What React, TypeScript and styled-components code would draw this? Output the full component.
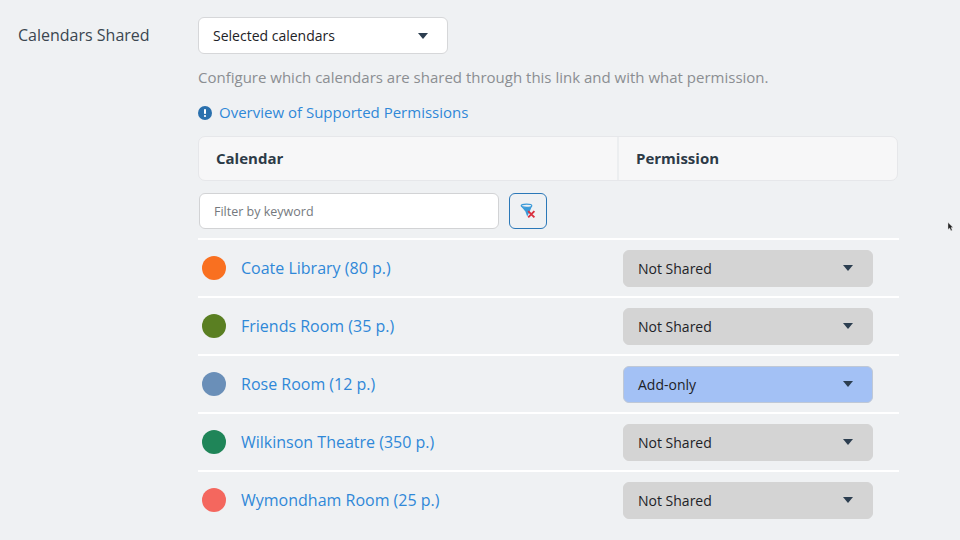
import React from "react";
import styled, { createGlobalStyle } from "styled-components";

const Global = createGlobalStyle`
  html, body { margin: 0; padding: 0; background: #eff1f3; height: 540px; overflow: hidden; }
  body { font-family: "Open Sans", "Liberation Sans", sans-serif; }
`;

const Page = styled.div`
  position: relative;
  width: 960px;
  height: 540px;
  display: flex;
  padding: 17px 0 0 18px;
  box-sizing: border-box;
  overflow: hidden;
`;

const FieldLabel = styled.div`
  width: 180px;
  flex: none;
  font-size: 16px;
  line-height: 36px;
  color: #3b4650;
`;

const Content = styled.div`
  width: 700px;
  flex: none;
  display: flex;
  flex-direction: column;
`;

const Select = styled.div<{ $bg: string; $border: string; $w: number; $h: number }>`
  width: ${(p) => p.$w}px;
  height: ${(p) => p.$h}px;
  box-sizing: border-box;
  display: flex;
  align-items: center;
  justify-content: space-between;
  padding: 0 19px 0 14px;
  background: ${(p) => p.$bg};
  border: 1px solid ${(p) => p.$border};
  border-radius: 6px;
  font-size: 14px;
  color: #1d2227;
`;

const Caret = styled.span`
  width: 0;
  height: 0;
  border-left: 5px solid transparent;
  border-right: 5px solid transparent;
  border-top: 6px solid #2c3e50;
`;

const Help = styled.p`
  margin: 13px 0 0;
  font-size: 15px;
  line-height: 20px;
  color: #8b8e92;
`;

const LinkRow = styled.div`
  display: flex;
  align-items: center;
  gap: 7px;
  margin-top: 16px;
  height: 20px;
`;

const Link = styled.a<{ $size: number }>`
  color: #2f88d8;
  font-size: ${(p) => p.$size}px;
  text-decoration: none;
`;

const OverviewLink = styled(Link)`
  margin-bottom: 2px;
`;

const Header = styled.div`
  display: flex;
  height: 45px;
  box-sizing: border-box;
  margin-top: 13px;
  background: #f7f7f8;
  border: 1px solid #e6e7ea;
  border-radius: 7px;
`;

const HeaderCell = styled.div<{ $w?: number }>`
  ${(p) => (p.$w ? `width: ${p.$w}px; border-right: 2px solid #eceef0;` : "flex: 1;")}
  box-sizing: border-box;
  display: flex;
  align-items: center;
  padding: 0 0 2px 17px;
  font-size: 15px;
  font-weight: 700;
  color: #2c3a47;
`;

const FilterRow = styled.div`
  display: flex;
  gap: 10px;
  margin: 12px 0 9px 1px;
`;

const FilterInput = styled.div`
  width: 300px;
  height: 36px;
  box-sizing: border-box;
  display: flex;
  align-items: center;
  padding-left: 14px;
  background: #fff;
  border: 1px solid #d2d3d5;
  border-radius: 6px;
  font-size: 12.5px;
  color: #75797e;
`;

const IconButton = styled.div`
  width: 38px;
  height: 36px;
  box-sizing: border-box;
  display: flex;
  align-items: center;
  justify-content: center;
  border: 1px solid #2b78b8;
  border-radius: 6px;
`;

const Row = styled.div`
  display: flex;
  align-items: center;
  height: 58px;
  box-sizing: border-box;
  border-top: 2px solid #fff;
  margin-right: -1px;
  padding: 0 26px 0 4px;
`;

const Dot = styled.span<{ $color: string }>`
  width: 24px;
  height: 24px;
  flex: none;
  border-radius: 50%;
  background: ${(p) => p.$color};
  margin-right: 15px;
`;

const RowLink = styled(Link)`
  flex: 1;
`;

const Cursor = styled.svg`
  position: absolute;
  left: 947px;
  top: 222px;
`;

const rows = [
  { name: "Coate Library (80 p.)", color: "#f97020", perm: "Not Shared" },
  { name: "Friends Room (35 p.)", color: "#5a7f22", perm: "Not Shared" },
  { name: "Rose Room (12 p.)", color: "#6a8fb8", perm: "Add-only" },
  { name: "Wilkinson Theatre (350 p.)", color: "#1f8558", perm: "Not Shared" },
  { name: "Wymondham Room (25 p.)", color: "#f4675e", perm: "Not Shared" },
];

export default function App() {
  return (
    <Page>
      <Global />
      <FieldLabel>Calendars Shared</FieldLabel>
      <Content>
        <Select $bg="#fff" $border="#d6d7d9" $w={250} $h={37}>
          Selected calendars
          <Caret />
        </Select>
        <Help>Configure which calendars are shared through this link and with what permission.</Help>
        <LinkRow>
          <svg width="14" height="14" viewBox="0 0 14 14">
            <circle cx="7" cy="7" r="7" fill="#2a70ad" />
            <rect x="6" y="3" width="2" height="5" rx="0.8" fill="#fff" />
            <circle cx="7" cy="10" r="1.1" fill="#fff" />
          </svg>
          <OverviewLink $size={15}>Overview of Supported Permissions</OverviewLink>
        </LinkRow>
        <Header>
          <HeaderCell $w={420}>Calendar</HeaderCell>
          <HeaderCell>Permission</HeaderCell>
        </Header>
        <FilterRow>
          <FilterInput>Filter by keyword</FilterInput>
          <IconButton>
            <svg width="16" height="16" viewBox="0 0 16 16">
              <ellipse cx="6.5" cy="2.8" rx="5.3" ry="1.6" fill="none" stroke="#3a9ad9" strokeWidth="1.2" />
              <path d="M1.2 3.6 L5.4 8.5 L7.2 13.5 L9.5 9 L11.8 3.6 Q6.5 5.6 1.2 3.6 Z" fill="#3a9ad9" />
              <path d="M8.2 8.2 L14.4 14.4 M14.4 8.2 L8.2 14.4" stroke="#d9303f" strokeWidth="1.9" />
            </svg>
          </IconButton>
        </FilterRow>
        {rows.map((r) => (
          <Row key={r.name}>
            <Dot $color={r.color} />
            <RowLink $size={16}>{r.name}</RowLink>
            <Select
              $bg={r.perm === "Add-only" ? "#a3c1f5" : "#d4d4d4"}
              $border={r.perm === "Add-only" ? "#bfc8d6" : "#d4d4d4"}
              $w={250}
              $h={37}
            >
              {r.perm}
              <Caret />
            </Select>
          </Row>
        ))}
      </Content>
      <Cursor width="7" height="10" viewBox="0 0 7 10">
        <path d="M1 0.5 L1 7.5 L2.6 6 L4 8.8 L5.2 8.2 L4 5.6 L6 5.4 Z" fill="#222" stroke="#ddd" strokeWidth="0.4" />
      </Cursor>
    </Page>
  );
}
